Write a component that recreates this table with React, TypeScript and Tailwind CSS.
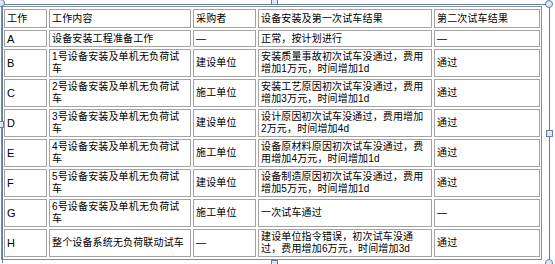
import { FC } from 'react';

type Row = { id: string; work: string[]; buyer: string; first: string[]; second: string };

const rows: Row[] = [
  { id: 'A', work: ['设备安装工程准备工作'], buyer: '—', first: ['正常，按计划进行'], second: '—' },
  { id: 'B', work: ['1号设备安装及单机无负荷试', '车'], buyer: '建设单位', first: ['安装质量事故初次试车没通过，费用', '增加1万元，时间增加1d'], second: '通过' },
  { id: 'C', work: ['2号设备安装及单机无负荷试', '车'], buyer: '施工单位', first: ['安装工艺原因初次试车没通过，费用', '增加3万元，时间增加1d'], second: '通过' },
  { id: 'D', work: ['3号设备安装及单机无负荷试', '车'], buyer: '建设单位', first: ['设计原因初次试车没通过，费用增加', '2万元，时间增加4d'], second: '通过' },
  { id: 'E', work: ['4号设备安装及单机无负荷试', '车'], buyer: '施工单位', first: ['设备原材料原因初次试车没通过，费', '用增加4万元，时间增加1d'], second: '通过' },
  { id: 'F', work: ['5号设备安装及单机无负荷试', '车'], buyer: '建设单位', first: ['设备制造原因初次试车没通过，费用', '增加5万元，时间增加1d'], second: '通过' },
  { id: 'G', work: ['6号设备安装及单机无负荷试', '车'], buyer: '施工单位', first: ['一次试车通过'], second: '—' },
  { id: 'H', work: ['整个设备系统无负荷联动试车'], buyer: '—', first: ['建设单位指令错误，初次试车没通', '过，费用增加6万元，时间增加3d'], second: '通过' },
];

const cell = 'border border-[#a3a3a3] px-[2px] flex flex-col justify-center leading-[12px] whitespace-nowrap overflow-hidden';

const Lines: FC<{ lines: string[] }> = ({ lines }) => (
  <>
    {lines.map((l, i) => (
      <span key={i}>{l}</span>
    ))}
  </>
);

// selection handles of the editor, drawn over the table
const Handle: FC<{ className: string; round?: boolean }> = ({ className, round }) => (
  <div
    className={
      'absolute w-[8px] h-[8px] bg-[#dce9f7] border border-[#5b7ea8] ' +
      (round ? 'rounded-full ' : '') +
      className
    }
  />
);

const App: FC = () => {
  return (
    <div
      className="relative w-[555px] h-[264px] bg-white overflow-hidden text-[10px] text-black tracking-[0.15px]"
      style={{ fontFamily: '"Liberation Sans", "Noto Sans CJK SC", sans-serif' }}
    >
      <div className="pl-[1px] pt-[6px]">
        <div className="grid grid-cols-[43px_142px_63px_174px_106px] grid-rows-[19px_17px_repeat(7,28px)] gap-[2px] p-[2px] border border-[#8c8c8c] w-[541px]">
          <div className={cell}>工作</div>
          <div className={cell}>工作内容</div>
          <div className={cell}>采购者</div>
          <div className={cell}>设备安装及第一次试车结果</div>
          <div className={cell}>第二次试车结果</div>
          {rows.map((r) => (
            <div key={r.id} className="contents">
              <div className={cell + ' text-[11px]'}>{r.id}</div>
              <div className={cell}><Lines lines={r.work} /></div>
              <div className={cell}>{r.buyer}</div>
              <div className={cell}><Lines lines={r.first} /></div>
              <div className={cell}>{r.second}</div>
            </div>
          ))}
        </div>
      </div>

      {/* selection frame */}
      <div className="absolute left-[3px] top-[4px] w-[547px] h-[1px] bg-[#5b7ea8]" />
      <div className="absolute left-[2px] top-[4px] w-[1px] h-[259px] bg-[#5b7ea8]" />
      <div className="absolute left-[549px] top-[4px] w-[1px] h-[260px] bg-[#5b7ea8]" />
      <Handle round className="left-[-3px] top-[-1px]" />
      <Handle round className="left-[545px] top-[0px]" />
      <Handle round className="left-[545px] top-[259px]" />
      <Handle className="left-[271px] top-[-2px] !w-[7px] !h-[7px]" />
      <Handle className="left-[-2px] top-[121px] !w-[6px] !h-[7px]" />
      <Handle className="left-[546px] top-[130px] !w-[7px] !h-[7px]" />
      <Handle className="left-[271px] top-[260px] !w-[7px] !h-[7px]" />
    </div>
  );
};

export default App;
